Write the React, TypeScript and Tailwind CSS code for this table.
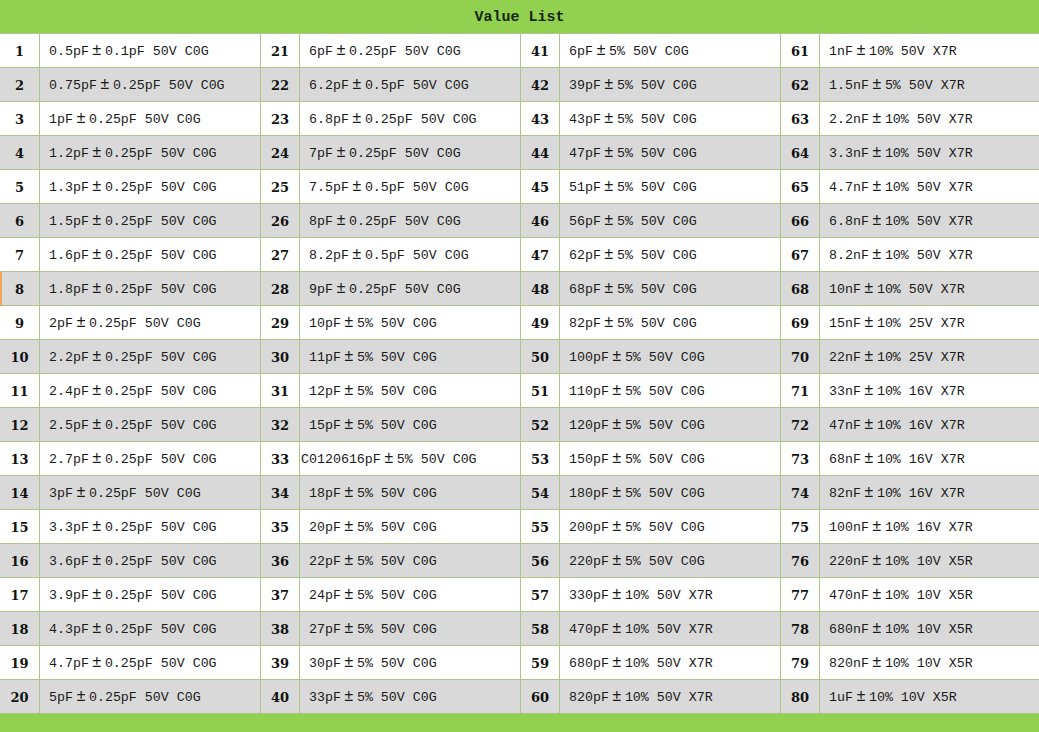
const col1 = [
  "0.5pF±0.1pF 50V C0G",
  "0.75pF±0.25pF 50V C0G",
  "1pF±0.25pF 50V C0G",
  "1.2pF±0.25pF 50V C0G",
  "1.3pF±0.25pF 50V C0G",
  "1.5pF±0.25pF 50V C0G",
  "1.6pF±0.25pF 50V C0G",
  "1.8pF±0.25pF 50V C0G",
  "2pF±0.25pF 50V C0G",
  "2.2pF±0.25pF 50V C0G",
  "2.4pF±0.25pF 50V C0G",
  "2.5pF±0.25pF 50V C0G",
  "2.7pF±0.25pF 50V C0G",
  "3pF±0.25pF 50V C0G",
  "3.3pF±0.25pF 50V C0G",
  "3.6pF±0.25pF 50V C0G",
  "3.9pF±0.25pF 50V C0G",
  "4.3pF±0.25pF 50V C0G",
  "4.7pF±0.25pF 50V C0G",
  "5pF±0.25pF 50V C0G",
];

const col2 = [
  "6pF±0.25pF 50V C0G",
  "6.2pF±0.5pF 50V C0G",
  "6.8pF±0.25pF 50V C0G",
  "7pF±0.25pF 50V C0G",
  "7.5pF±0.5pF 50V C0G",
  "8pF±0.25pF 50V C0G",
  "8.2pF±0.5pF 50V C0G",
  "9pF±0.25pF 50V C0G",
  "10pF±5% 50V C0G",
  "11pF±5% 50V C0G",
  "12pF±5% 50V C0G",
  "15pF±5% 50V C0G",
  "C0120616pF±5% 50V C0G",
  "18pF±5% 50V C0G",
  "20pF±5% 50V C0G",
  "22pF±5% 50V C0G",
  "24pF±5% 50V C0G",
  "27pF±5% 50V C0G",
  "30pF±5% 50V C0G",
  "33pF±5% 50V C0G",
];

const col3 = [
  "6pF±5% 50V C0G",
  "39pF±5% 50V C0G",
  "43pF±5% 50V C0G",
  "47pF±5% 50V C0G",
  "51pF±5% 50V C0G",
  "56pF±5% 50V C0G",
  "62pF±5% 50V C0G",
  "68pF±5% 50V C0G",
  "82pF±5% 50V C0G",
  "100pF±5% 50V C0G",
  "110pF±5% 50V C0G",
  "120pF±5% 50V C0G",
  "150pF±5% 50V C0G",
  "180pF±5% 50V C0G",
  "200pF±5% 50V C0G",
  "220pF±5% 50V C0G",
  "330pF±10% 50V X7R",
  "470pF±10% 50V X7R",
  "680pF±10% 50V X7R",
  "820pF±10% 50V X7R",
];

const col4 = [
  "1nF±10% 50V X7R",
  "1.5nF±5% 50V X7R",
  "2.2nF±10% 50V X7R",
  "3.3nF±10% 50V X7R",
  "4.7nF±10% 50V X7R",
  "6.8nF±10% 50V X7R",
  "8.2nF±10% 50V X7R",
  "10nF±10% 50V X7R",
  "15nF±10% 25V X7R",
  "22nF±10% 25V X7R",
  "33nF±10% 16V X7R",
  "47nF±10% 16V X7R",
  "68nF±10% 16V X7R",
  "82nF±10% 16V X7R",
  "100nF±10% 16V X7R",
  "220nF±10% 10V X5R",
  "470nF±10% 10V X5R",
  "680nF±10% 10V X5R",
  "820nF±10% 10V X5R",
  "1uF±10% 10V X5R",
];

const columns = [col1, col2, col3, col4];

function Value({ text }: { text: string }) {
  const [left, right] = text.split("±");
  const lead = text.startsWith("C01") ? "" : " ";
  return (
    <span className="whitespace-pre">
      {lead}
      {left}
      <span className="inline-block w-[16px] text-center text-[16px] leading-none">±</span>
      {right}
    </span>
  );
}

export default function App() {
  return (
    <div className="w-[1039px] h-[732px] bg-[#92d050] flex flex-col overflow-hidden">
      <div className="h-[33px] pt-[4px] flex items-center justify-center font-['Liberation_Mono',monospace] font-bold text-[15px] text-[#17260f]">
        Value List
      </div>
      <div className="grid grid-cols-[39px_220px_38px_220px_38px_220px_38px_219px] gap-px bg-[#aec48c] border-y border-[#aec48c]">
        {col1.map((_, r) => {
          const bg = r % 2 === 1 ? "bg-[#d9d9d9]" : "bg-white";
          return columns.map((col, c) => (
            <>
              <div
                key={`n${r}-${c}`}
                className={`${bg} h-[33px] pt-[3px] flex items-center justify-center font-['DejaVu_Serif',serif] font-bold text-[13px] text-[#111] ${
                  r === 7 && c === 0 ? "shadow-[inset_2px_0_0_#f2a65a]" : ""
                }`}
              >
                {c * 20 + r + 1}
              </div>
              <div
                key={`v${r}-${c}`}
                className={`${bg} h-[33px] pt-[3px] flex items-center pl-px font-['Liberation_Mono',monospace] text-[13.3px] text-[#1a1a1a]`}
              >
                <Value text={col[r]} />
              </div>
            </>
          ));
        })}
      </div>
    </div>
  );
}
